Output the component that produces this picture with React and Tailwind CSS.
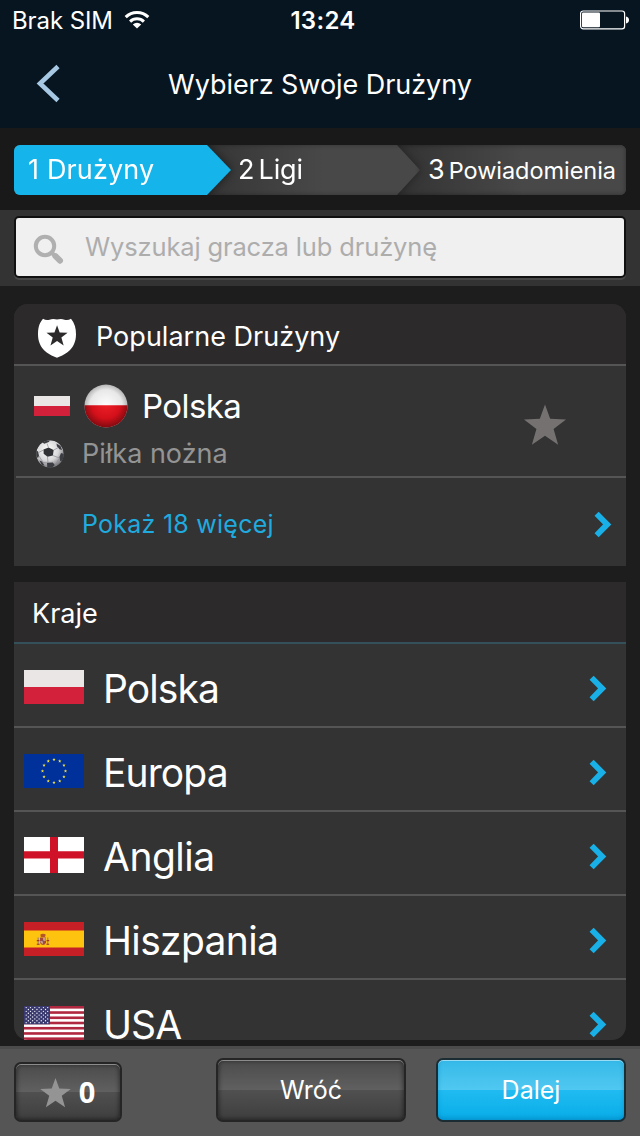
import clsx from 'clsx'

const STAR = 'M12 0 L14.95 8.2 L24 8.6 L16.9 14 L19.5 23 L12 17.9 L4.5 23 L7.1 14 L0 8.6 L9.05 8.2 Z'

const countries = [
  { name: 'Polska', flag: PolandFlag, tracking: 'tracking-[-0.9px]' },
  { name: 'Europa', flag: EuropeFlag, tracking: 'tracking-[-0.9px]' },
  { name: 'Anglia', flag: EnglandFlag, tracking: 'tracking-[-0.5px]' },
  { name: 'Hiszpania', flag: SpainFlag, tracking: 'tracking-[-0.65px]' },
  { name: 'USA', flag: UsaFlag, tracking: 'tracking-[-0.9px]' },
]

function PolandFlag({ className = 'h-[34px] w-[60px]' }) {
  return (
    <div className={clsx('flex flex-col', className)}>
      <div className="flex-1 bg-[#e9e6e5]" />
      <div className="flex-1 bg-[#d3213c]" />
    </div>
  )
}

function EuropeFlag() {
  return (
    <svg width="60" height="34" viewBox="0 0 60 34">
      <rect width="60" height="34" fill="#00309a" />
      {Array.from({ length: 12 }, (_, i) => {
        const a = (i * Math.PI) / 6
        const x = 30 + 11.5 * Math.sin(a) - 1.7
        const y = 17 - 11.5 * Math.cos(a) - 1.7
        return <path key={i} d={STAR} fill="#f7e640" transform={`translate(${x} ${y}) scale(0.142)`} />
      })}
    </svg>
  )
}

function EnglandFlag() {
  return (
    <svg width="60" height="36" viewBox="0 0 60 36">
      <rect width="60" height="36" fill="#fff" />
      <path d="M26 0h8v36h-8zM0 14.2h60v7.2H0z" fill="#cf1228" />
    </svg>
  )
}

function SpainFlag() {
  return (
    <svg width="60" height="34" viewBox="0 0 60 34">
      <rect width="60" height="34" fill="#c62026" />
      <rect y="8.5" width="60" height="17" fill="#fdc30f" />
      <path d="M13.5 15.5h1.4v7h-1.4zM23 15.5h1.4v7H23z" fill="#b08a70" />
      <path d="M12.8 18h2.6v1.2h-2.6zM22.6 18h2.6v1.2h-2.6zM12.8 21.8h2.8v1h-2.8zM22.4 21.8h2.8v1h-2.8z" fill="#a5341f" />
      <path d="M16.3 12.6q2.7-1.5 5.4 0l-.6 2.4h-4.2z" fill="#b4562a" />
      <path d="M16 15.4h6v4.8q-.3 2.6-3 2.8-2.7-.2-3-2.8z" fill="#a8483a" />
      <path d="M19 15.6h2.7v3.3H19zM16.3 19h2.7v3q-2.2-.4-2.7-2z" fill="#c99a86" />
      <circle cx="19" cy="19" r="0.8" fill="#6a5a70" />
    </svg>
  )
}

function UsaFlag() {
  const h = 34 / 13
  return (
    <svg width="60" height="34" viewBox="0 0 60 34">
      <rect width="60" height="34" fill="#fff" />
      {[0, 2, 4, 6, 8, 10, 12].map((i) => (
        <rect key={i} y={i * h} width="60" height={h} fill="#b0283f" />
      ))}
      <rect width="26" height="18.3" fill="#3a3a70" />
      {Array.from({ length: 9 }, (_, r) =>
        Array.from({ length: r % 2 ? 5 : 6 }, (_, c) => (
          <circle key={`${r}-${c}`} cx={2.2 + c * 4.3 + (r % 2) * 2.15} cy={1.6 + r * 1.88} r="0.65" fill="#fff" />
        )),
      )}
    </svg>
  )
}

function Chevron({ className }) {
  return (
    <svg className={className} width="18" height="27" viewBox="0 0 18 27" fill="none">
      <path d="M2.6 2.8 L13.2 13.4 L2.6 24.2" stroke="#19b0e7" strokeWidth="5.8" />
    </svg>
  )
}

function Wifi() {
  return (
    <svg width="26" height="20" viewBox="0 0 26 20" fill="none" stroke="#fff" strokeWidth="3">
      <path d="M1.7 7.1a16 16 0 0 1 22.6 0" />
      <path d="M6.1 11.6a9.8 9.8 0 0 1 13.8 0" />
      <path d="M13 18.6l-4.2-4.1a6 6 0 0 1 8.4 0z" fill="#fff" stroke="none" />
    </svg>
  )
}

function Battery() {
  return (
    <svg width="50" height="20" viewBox="0 0 50 20">
      <rect x="0.6" y="1" width="44" height="17.8" rx="2.6" fill="none" stroke="#fff" strokeWidth="1.2" />
      <rect x="2" y="2.6" width="18" height="14.6" rx="1" fill="#fff" />
      <path d="M46 6.5q3 .6 3 3.5t-3 3.5z" fill="#fff" />
    </svg>
  )
}

function Ball() {
  return (
    <svg width="28" height="28" viewBox="0 0 28 28">
      <defs>
        <radialGradient id="leather" cx="0.42" cy="0.35" r="0.65">
          <stop offset="0" stopColor="#fff" />
          <stop offset="0.6" stopColor="#d8d8da" />
          <stop offset="1" stopColor="#77777b" />
        </radialGradient>
        <clipPath id="ballClip">
          <circle cx="14" cy="14" r="13.8" />
        </clipPath>
      </defs>
      <g clipPath="url(#ballClip)">
        <circle cx="14" cy="14" r="13.8" fill="url(#leather)" />
        <path d="M7.5 9.5l5-2 5.2 2.6-.8 5.4-5.4 1.3-3.8-3z" fill="#303236" />
        <path d="M5 1.5L9 .5l5 0-1.2 1.5-4.5 1.8zM20.5 3.5l4 2.5 1.5 4-2.5-.8-2.6-3zM25 13l3 1-1 6.5-2.8.5-.8-4zM11 22.8l5.8-.2 2 2.4-3 3h-4.5zM0 11l2 .3 1 4.5L2 18l-2-2zM3.5 20.5l2.5 1 2.5 4-2.5 0z" fill="#3b3d42" />
        <path d="M11 3.5l1.5 4M17.7 10.1l4.5-2.5M16.9 15.5l6.5 2.5M11.5 16.8l.5 6M7.5 10L2.5 12.5M23 19l-4 6M3 16l4 6.5 4 .3" stroke="#8b8b90" strokeWidth="0.7" fill="none" />
      </g>
    </svg>
  )
}

function RoundFlag() {
  return (
    <svg width="44" height="44" viewBox="0 0 44 44">
      <defs>
        <radialGradient id="ballWhite">
          <stop offset="0" stopColor="#fff" />
          <stop offset="0.75" stopColor="#e8e8e8" />
          <stop offset="1" stopColor="#b5b5b5" />
        </radialGradient>
        <radialGradient id="ballRed" gradientUnits="userSpaceOnUse" cx="22" cy="20" r="24">
          <stop offset="0" stopColor="#ee2028" />
          <stop offset="0.6" stopColor="#d4101a" />
          <stop offset="1" stopColor="#7d0a10" />
        </radialGradient>
      </defs>
      <circle cx="22" cy="22" r="21.5" fill="url(#ballWhite)" />
      <path d="M0.5 21.2h43v.8a21.5 21.5 0 0 1-43 0z" fill="url(#ballRed)" />
    </svg>
  )
}

function Shield() {
  return (
    <svg className="mt-[2px]" width="40" height="40" viewBox="0 0 40 40">
      <path d="M6 .8Q9 2.6 12.5 1.7 16 .6 20 1.6q4-1 7.5.1Q31 2.6 34 .8q5 6 5 15.4c0 14-9.5 20-19 23.5C10.5 36.2 1 30.2 1 16.2 1 7.7 3.5 3.7 6 .8z" fill="#fff" />
      <path d={STAR} fill="#2c2a2b" transform="translate(9.5 7.2) scale(0.88)" />
    </svg>
  )
}

function StatusBar() {
  return (
    <div className="flex h-10 items-center justify-between pl-[12px] pr-[10px]">
      <div className="flex w-[240px] items-center gap-[11px]">
        <span className="pt-[2px] text-[24px] leading-10 tracking-[-0.1px]">Brak SIM</span>
        <Wifi />
      </div>
      <span className="pl-[4px] pt-[2px] text-[24px] leading-10 font-semibold tracking-[0.3px]">13:24</span>
      <div className="flex w-[240px] justify-end">
        <Battery />
      </div>
    </div>
  )
}

function Header() {
  return (
    <header className="h-32 bg-[#071520]">
      <StatusBar />
      <div className="relative flex h-[88px] justify-center">
        <button className="absolute left-[36px] top-[24px]">
          <svg width="26" height="40" viewBox="0 0 26 40" fill="none">
            <path d="M22 2.5 L4 19.5 L22 36.5" stroke="#a6c8e3" strokeWidth="4.6" />
          </svg>
        </button>
        <h1 className="text-[27px] leading-[90px] tracking-[-0.05px]">Wybierz Swoje Drużyny</h1>
      </div>
    </header>
  )
}

function Steps() {
  return (
    <div className="h-[82px] bg-[#191919] px-[14px] pt-[17px]">
      <div className="flex h-[50px] overflow-hidden rounded-[6px] bg-[#484848] text-[27px] leading-[50px]">
        <div className="z-20 drop-shadow-[1px_0_5px_rgba(0,0,0,0.45)]">
          <div className="h-full w-[217px] bg-[#15b4ea] pl-[14px] [clip-path:polygon(0_0,193px_0,100%_50%,193px_100%,0_100%)]">
            <span className="tracking-[0.15px]">1 Drużyny</span>
          </div>
        </div>
        <div className="z-10 -ml-6 drop-shadow-[1px_0_4px_rgba(0,0,0,0.3)]">
          <div className="flex h-full w-[213px] gap-[4px] bg-linear-to-r from-[#363636] to-[#484848] to-55% pl-[31px] shadow-[inset_0_0_5px_rgba(0,0,0,0.3)] [clip-path:polygon(0_0,190px_0,100%_50%,190px_100%,0_100%)]">
            <span>2</span>
            <span className="tracking-[-0.1px]">Ligi</span>
          </div>
        </div>
        <div className="-ml-6 flex flex-1 gap-[4px] bg-linear-to-r from-[#333] to-[#484848] to-55% pl-[32px] shadow-[inset_0_0_5px_rgba(0,0,0,0.4)]">
          <span>3</span>
          <span className="text-[23.5px] leading-[52px] tracking-[-0.05px]">Powiadomienia</span>
        </div>
      </div>
    </div>
  )
}

function Search() {
  return (
    <div className="h-[76px] bg-[#333] px-[14px] pt-[6px]">
      <div className="flex h-[62px] items-center rounded-[5px] border-2 border-[#111] bg-[#f0f0f0] pl-[17px] shadow-[0_2px_0_#484848]">
        <svg className="mt-[3px]" width="32" height="32" viewBox="0 0 32 32" fill="none" stroke="#b0b0b0">
          <circle cx="12" cy="13" r="9.2" strokeWidth="4" />
          <path d="M18.5 19.5l3 3" strokeWidth="4" />
          <path d="M22.5 23.2l4.5 4.5" strokeWidth="6" strokeLinecap="round" />
        </svg>
        <span className="ml-[20px] text-[25.5px] leading-[58px] tracking-[-0.14px] text-[#adadad]">
          Wyszukaj gracza lub drużynę
        </span>
      </div>
    </div>
  )
}

function PopularTeams() {
  return (
    <section className="h-[262px] overflow-hidden rounded-t-[14px] bg-[#333]">
      <div className="flex h-[62px] items-center border-b-2 border-[#555] bg-[#2c2a2b] pl-[23px] pt-[6px]">
        <Shield />
        <h2 className="ml-[19px] text-[27px] leading-[60px] tracking-[0.02px]">Popularne Drużyny</h2>
      </div>
      <div className="ml-[2px] flex h-[112px] items-start justify-between border-b-2 border-[#555] pl-[18px] pr-[60px]">
        <div>
          <div className="flex items-center pt-[18px]">
            <PolandFlag className="h-5 w-9" />
            <div className="ml-[14px]">
              <RoundFlag />
            </div>
            <span className="ml-[14px] pt-[1px] text-[33px] leading-[43px] tracking-[-0.6px]">Polska</span>
          </div>
          <div className="flex items-center pl-[2px]">
            <Ball />
            <span className="ml-[18px] text-[27px] leading-[52px] text-[#949494]">Piłka nożna</span>
          </div>
        </div>
        <svg className="mt-[38px]" width="42" height="42" viewBox="0 0 24 23.5">
          <path d={STAR} fill="#757171" />
        </svg>
      </div>
      <button className="flex h-[88px] w-full items-center justify-between pl-[68px] pr-[14px] pt-[4px]">
        <span className="pt-px text-[25px] tracking-[0.25px] text-[#1fabdf]">Pokaż 18 więcej</span>
        <Chevron />
      </button>
    </section>
  )
}

function CountryList() {
  return (
    <section className="mt-4 h-[458px] overflow-hidden rounded-b-[14px] bg-[#333]">
      <div className="h-[62px] border-b-2 border-[#34505a] bg-[#2c2a2b] pl-[18px]">
        <h2 className="text-[27px] leading-[64px]">Kraje</h2>
      </div>
      {countries.map(({ name, flag: Flag, tracking }) => (
        <div key={name} className="flex h-[84px] items-center border-b-2 border-[#555] pl-[10px] pr-[19px] pt-[4px]">
          <Flag />
          <span className={clsx('ml-[19px] flex-1 pt-[2px] text-[39px] leading-[75px]', tracking)}>{name}</span>
          <Chevron className="mt-[2px]" />
        </div>
      ))}
    </section>
  )
}

function GlossyButton({ blue, className, children }) {
  return (
    <button
      className={clsx(
        'flex items-center justify-center rounded-[7px] border-2',
        blue
          ? 'border-[#1c2c33] bg-[linear-gradient(#35b9e8,#50c8f1_50%,#20bbf1_50%,#08ade8)] shadow-[inset_0_1px_0_#9bdcf5,inset_0_-2px_4px_rgba(0,110,170,0.45)]'
          : 'border-[#252525] bg-[linear-gradient(#4b4b4b,#606060_50%,#505050_50%,#3e3e3e)] shadow-[inset_0_1px_0_#8c8c8c,inset_0_0_4px_1px_rgba(0,0,0,0.45)]',
        className,
      )}
    >
      {children}
    </button>
  )
}

function Footer() {
  return (
    <footer className="flex h-[90px] items-end border-t-[3px] border-[#4b4b4b] bg-[#555] px-[14px] pb-[14px]">
      <GlossyButton className="h-[60px] w-[108px] gap-[8px]">
        <svg className="mt-[2px]" width="31" height="30" viewBox="0 0 24 23.5">
          <path d={STAR} fill="#949494" />
        </svg>
        <span className="mr-[1px] font-['Open_Sans',sans-serif] text-[29px] font-bold">0</span>
      </GlossyButton>
      <GlossyButton className="ml-[94px] h-16 w-[190px]">
        <span className="pt-[2px] text-[25px]">Wróć</span>
      </GlossyButton>
      <GlossyButton blue className="ml-[30px] h-16 w-[190px]">
        <span className="pt-[2px] text-[25px]">Dalej</span>
      </GlossyButton>
    </footer>
  )
}

export default function App() {
  return (
    <div className="h-[1136px] w-[640px] overflow-hidden bg-[#1d1d1d] font-['Inter',sans-serif] text-white">
      <Header />
      <Steps />
      <Search />
      <main className="h-[760px] px-[14px] pt-[18px]">
        <PopularTeams />
        <CountryList />
      </main>
      <Footer />
    </div>
  )
}
